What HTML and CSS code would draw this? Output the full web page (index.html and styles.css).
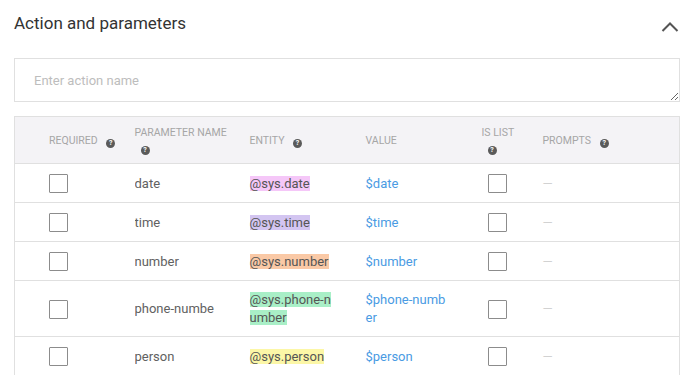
FILE: index.html
```html
<!DOCTYPE html>
<html lang="en">
<head>
    <meta charset="UTF-8">
    <meta name="viewport" content="width=device-width, initial-scale=1.0">
    <title>Action and parameters</title>
    <link rel="stylesheet" href="styles.css">
</head>
<body>
    <section class="panel">
        <div class="panel-head">
            <h1>Action and parameters</h1>
            <svg class="chevron" viewBox="0 0 18 12" width="18" height="12">
                <polyline points="1.5,10 9,2.5 16.5,10" fill="none" stroke="#555" stroke-width="2"/>
            </svg>
        </div>

        <textarea class="action-name" placeholder="Enter action name"></textarea>

        <table class="params">
            <colgroup>
                <col style="width:120px">
                <col style="width:115px">
                <col style="width:116px">
                <col style="width:116px">
                <col style="width:61px">
                <col>
            </colgroup>
            <thead>
                <tr>
                    <th class="first">Required <span class="help">?</span></th>
                    <th>Parameter name <span class="help">?</span></th>
                    <th>Entity <span class="help">?</span></th>
                    <th>Value</th>
                    <th>Is list <span class="help">?</span></th>
                    <th>Prompts <span class="help">?</span></th>
                </tr>
            </thead>
            <tbody>
                <tr>
                    <td class="first"><input type="checkbox" class="box"></td>
                    <td><span class="pname">date</span></td>
                    <td><span class="entity pink">@sys.date</span></td>
                    <td class="value">$date</td>
                    <td><input type="checkbox" class="box list"></td>
                    <td class="dash">—</td>
                </tr>
                <tr>
                    <td class="first"><input type="checkbox" class="box"></td>
                    <td><span class="pname">time</span></td>
                    <td><span class="entity lavender">@sys.time</span></td>
                    <td class="value">$time</td>
                    <td><input type="checkbox" class="box list"></td>
                    <td class="dash">—</td>
                </tr>
                <tr>
                    <td class="first"><input type="checkbox" class="box"></td>
                    <td><span class="pname">number</span></td>
                    <td><span class="entity peach">@sys.number</span></td>
                    <td class="value">$number</td>
                    <td><input type="checkbox" class="box list"></td>
                    <td class="dash">—</td>
                </tr>
                <tr>
                    <td class="first"><input type="checkbox" class="box"></td>
                    <td><span class="pname">phone-numbe</span></td>
                    <td><span class="entity mint">@sys.phone-number</span></td>
                    <td class="value">$phone-number</td>
                    <td><input type="checkbox" class="box list"></td>
                    <td class="dash">—</td>
                </tr>
                <tr>
                    <td class="first"><input type="checkbox" class="box"></td>
                    <td><span class="pname">person</span></td>
                    <td><span class="entity yellow">@sys.person</span></td>
                    <td class="value">$person</td>
                    <td><input type="checkbox" class="box list"></td>
                    <td class="dash">—</td>
                </tr>
            </tbody>
        </table>
    </section>
</body>
</html>
```

FILE: styles.css
```css
:root {
    --font-main: Roboto, 'Liberation Sans', sans-serif;
    --color-title: #333;
    --color-text: #616161;
    --color-muted: #a6a6a6;
    --color-line: #e0e0e0;
    --color-head: #f4f3f6;
    --color-link: #4a9be3;
}

body {
    margin: 0;
    padding: 11px 20px 0 14px;
    font-family: var(--font-main);
    background: #fff;
    color: var(--color-text);
    overflow: hidden;
}

/* 제목 줄 */
.panel-head {
    display: flex;
    justify-content: space-between;
    align-items: flex-start;
}

h1 {
    margin: 0;
    font-size: 17px;
    font-weight: 400;
    line-height: 24px;
    color: var(--color-title);
}

.chevron { margin: 10px 1px 0 0; }

/* 액션 이름 입력 */
.action-name {
    display: block;
    box-sizing: border-box;
    width: 100%;
    height: 44px;
    margin: 23px 0 14px;
    padding: 14px 19px 10px;
    border: 1px solid var(--color-line);
    border-radius: 0;
    font-family: var(--font-main);
    font-size: 13px;
    color: var(--color-text);
    outline: none;
}

.action-name::placeholder { color: #bdbdbd; }

/* 파라미터 테이블 */
.params {
    width: 100%;
    table-layout: fixed;
    border-collapse: collapse;
    border: 1px solid var(--color-line);
}

.params th {
    height: 46px;
    padding: 0 16px 0 0;
    background: var(--color-head);
    font-size: 10.5px;
    font-weight: 400;
    line-height: 15px;
    text-transform: uppercase;
    text-align: left;
    color: var(--color-muted);
    border-bottom: 1px solid var(--color-line);
}

.params td {
    padding: 10px 0 9px;
    font-size: 13px;
    line-height: 18px;
    vertical-align: middle;
    border-bottom: 1px solid var(--color-line);
}

.params .first { padding-left: 34px; }

.help {
    display: inline-block;
    width: 9px;
    height: 9px;
    margin-left: 6px;
    border-radius: 50%;
    background: #5a5a5a;
    color: #fff;
    font-size: 7px;
    font-weight: 700;
    line-height: 9px;
    text-align: center;
    vertical-align: -1px;
}

.box {
    appearance: none;
    display: block;
    box-sizing: border-box;
    width: 19px;
    height: 19px;
    margin: 0;
    border: 1.5px solid #8c8c8c;
    border-radius: 1px;
    background: #fff;
}

.box.list { margin-left: 6px; }

.pname {
    display: block;
    width: 82px;
    overflow: hidden;
    white-space: nowrap;
    color: var(--color-text);
}

.params td:nth-child(3),
.params td:nth-child(4) {
    padding-right: 30px;
    word-break: break-all;
}

.entity { color: #555; }
.pink { background: #f5c7f8; }
.lavender { background: #d3c5f1; }
.peach { background: #fac9a6; }
.mint { background: #a9efc7; }
.yellow { background: #fcf7a7; }

.value { color: var(--color-link); }

.dash {
    color: #d2d2d2;
    font-size: 11px;
}
```
